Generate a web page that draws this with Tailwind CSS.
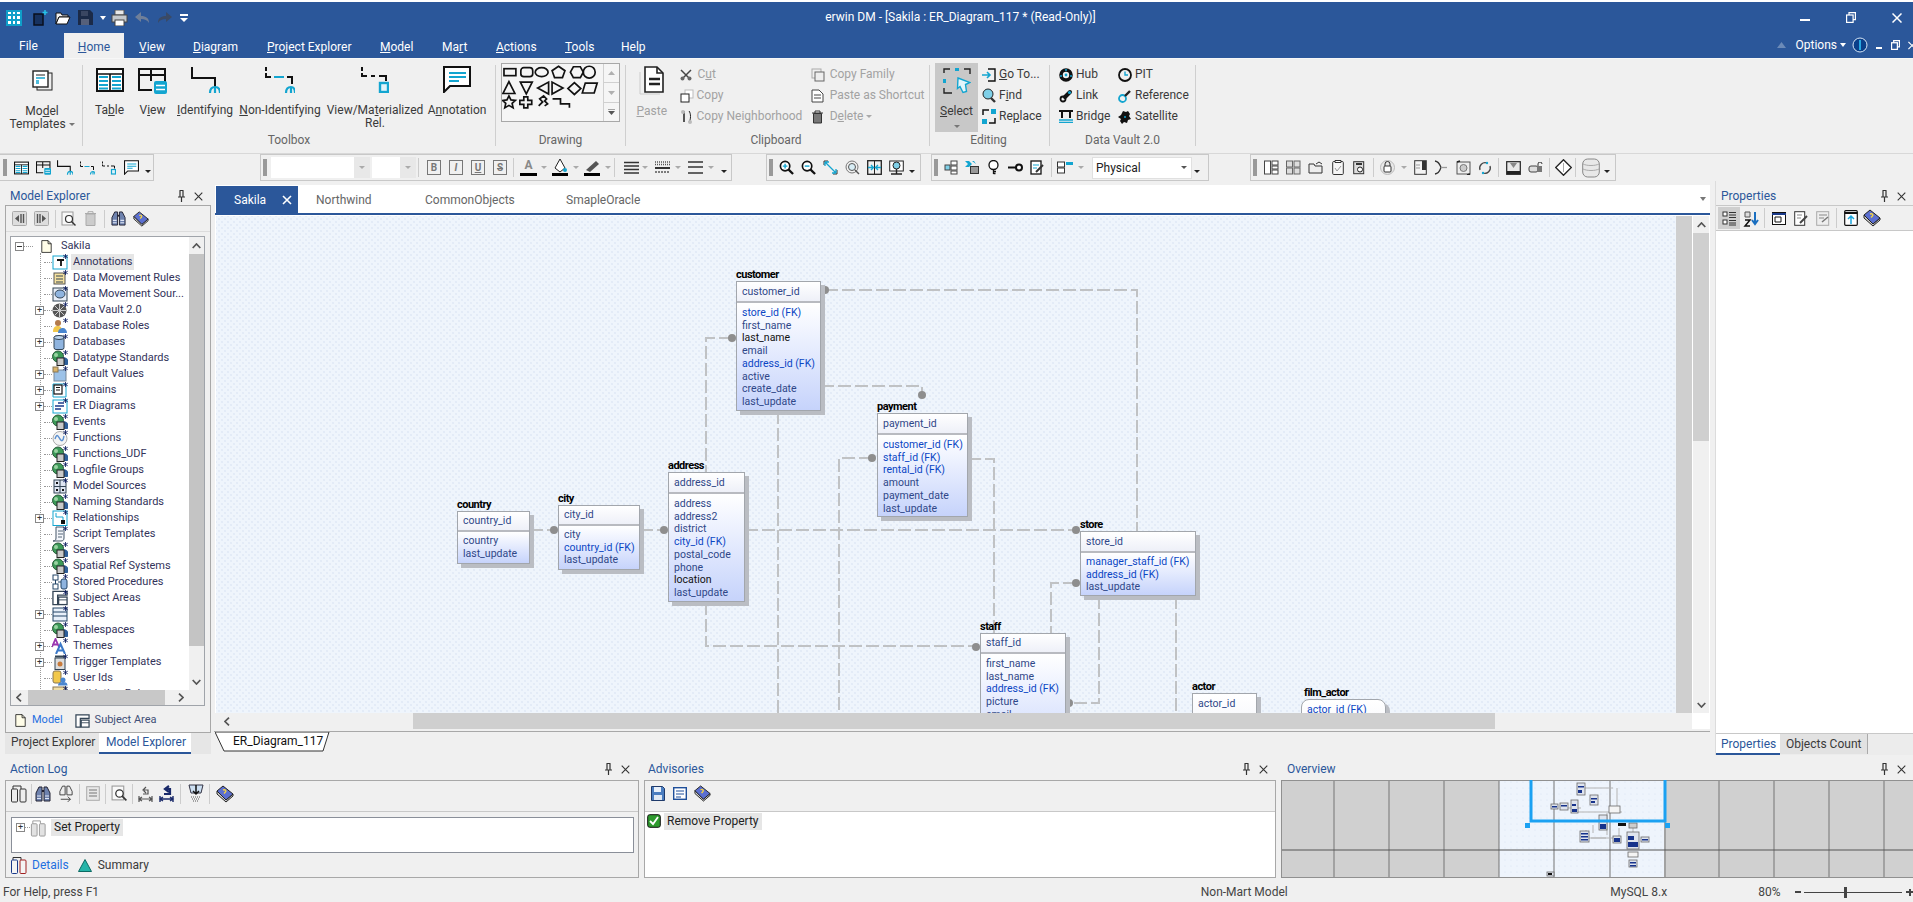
<!DOCTYPE html>
<html lang="en">
<head>
  <meta charset="UTF-8">
  <title>erwin DM</title>
  <script src="https://cdn.jsdelivr.net/npm/@tailwindcss/browser@4"></script>
</head>
<body class="bg-[#f0f0f0] overflow-hidden">

<!-- shared icons -->
<svg width="0" height="0" class="absolute">
  <defs>
    <symbol id="s-table" viewBox="0 0 28 24"><rect x="1" y="1" width="26" height="22" fill="#fff" stroke="#111" stroke-width="2"/><path d="M1 6h26M14 6v17" stroke="#111" stroke-width="1.600"/><path d="M3 9h9M3 13h9M3 17h9M3 20.500h9M16 9h9M16 13h9M16 17h9M16 20.500h9" stroke="#13a5d0" stroke-width="2"/></symbol>
    <symbol id="s-view" viewBox="0 0 29 26"><path d="M14 22H1V1h26v13M1 7h26M13 1v12" fill="none" stroke="#111" stroke-width="2"/><rect x="16" y="13" width="13" height="13" rx="2" fill="#13a5d0"/><path d="M18 17.500h9M18 21.500h9" stroke="#fff" stroke-width="1.500"/></symbol>
    <symbol id="s-ident" viewBox="0 0 29 26"><path d="M1 0v11h23v9" fill="none" stroke="#111" stroke-width="2"/><path d="M19 26c0-4 2-6 5-6s5 2 5 6M24 20v6" fill="none" stroke="#13a5d0" stroke-width="2.200"/></symbol>
    <symbol id="s-nonid" viewBox="0 0 30 26"><path d="M1 0v4M1 6v4h5M22 10h5v7" fill="none" stroke="#111" stroke-width="2"/><path d="M9 10h10" stroke="#13a5d0" stroke-width="2"/><path d="M21 26c0-4 2-6 5-6s4 2 4 6M26 20v6" fill="none" stroke="#13a5d0" stroke-width="2.200"/></symbol>
    <symbol id="s-viewrel" viewBox="0 0 28 26"><path d="M1 0v4M1 6v3h5M10 9h4M18 9h7v5" fill="none" stroke="#111" stroke-width="2"/><rect x="19" y="16" width="8" height="9" fill="#dff3fa" stroke="#13a5d0" stroke-width="2.400"/></symbol>
    <symbol id="s-annot" viewBox="0 0 28 27"><path d="M1 1h26v19H7l-6 6z" fill="#fff" stroke="#111" stroke-width="2"/><path d="M6 7h17M6 11h17M6 15h10" stroke="#13a5d0" stroke-width="2"/></symbol>
    <symbol id="s-star" viewBox="0 0 9 9"><path d="M4.500 0v9M.5 2.200l8 4.600M8.500 2.200l-8 4.600" stroke="#0b1a5e" stroke-width="1.500"/></symbol>
    <symbol id="s-globe" viewBox="0 0 16 16"><circle cx="6" cy="6.500" r="5.500" fill="#3c9a58" stroke="#2a5a3a"/><circle cx="4" cy="5" r="2" fill="#9ad3a2"/><path d="M8 9a4 4 0 0 1 7.500 6H8z" fill="#2f5f9a"/><rect x="5" y="8" width="7" height="7.500" fill="#c9c9c9" stroke="#222"/></symbol>
    <symbol id="s-pin" viewBox="0 0 9 12"><path d="M2.500.5h4M3 .5v6M6 .5v6M1 7h7M4.500 7v5" fill="none" stroke="#333" stroke-width="1.200"/></symbol>
    <symbol id="s-x" viewBox="0 0 9 9"><path d="M.7.700l7.600 7.600M8.300.700L.7 8.300" stroke="#333" stroke-width="1.100"/></symbol>
    <symbol id="s-book" viewBox="0 0 18 18"><path d="M1 6v3l9 8 7-6V9l-7 6z" fill="#d0d0d0" stroke="#222"/><path d="M1 6l6-5 10 8-7 6z" fill="#5b6fd0" stroke="#222"/><path d="M7 5c2-1 4 1 2 2.500l-1 1" fill="none" stroke="#f5d442" stroke-width="1.400"/></symbol>
    <symbol id="s-bino" viewBox="0 0 16 16"><path d="M4 1h3v14H1V7zM9 1h3l3 6v8H9z" fill="#6e82ae" stroke="#223"/><path d="M7 5h2" stroke="#223" stroke-width="2"/><path d="M2 10h4M2 12.500h4M10 10h4M10 12.500h4" stroke="#dfe6f5" stroke-width="1.200"/></symbol>
    <symbol id="s-find" viewBox="0 0 16 16"><circle cx="6.500" cy="6.500" r="5" fill="#fff" stroke="#111" stroke-width="1.800"/><path d="M10 10l5 5" stroke="#111" stroke-width="2.400"/></symbol>
    <symbol id="s-doc" viewBox="0 0 14 16"><path d="M1 .5h8l4 4v11H1z" fill="#fffde8" stroke="#111"/><path d="M9 .5v4h4" fill="none" stroke="#111"/></symbol>
    <symbol id="s-subj" viewBox="0 0 17 16"><path d="M1 15V1h15v4H6v10z" fill="#fff" stroke="#345" stroke-width="1.400"/><rect x="7" y="7" width="9" height="8" fill="#fff" stroke="#345" stroke-width="1.400"/><path d="M7 10h9" stroke="#345"/></symbol>
  </defs>
</svg>

<div class="w-[1913px] h-[902px] flex flex-col font-['Roboto','Liberation_Sans',sans-serif] text-[12px] text-[#3a3a3a] overflow-hidden">
  <div class="h-[2px] bg-white"></div>

  <!-- title row -->
  <div class="h-[31px] bg-[#2b579a] flex items-center text-white">
    <div class="w-[200px] flex items-center">
      <div class="ml-[6px] w-[16px] h-[16px] bg-[#0f9fc9] grid grid-cols-3 gap-[2px] p-[2px]">
        <span class="bg-white"></span><span class="bg-white"></span><span class="bg-white"></span>
        <span class="bg-white"></span><span class="bg-white"></span><span class="bg-white"></span>
        <span class="bg-white"></span><span class="bg-white"></span><span class="bg-white"></span>
      </div>
      <!-- quick access -->
      <svg class="ml-[11px]" width="15" height="16" viewBox="0 0 15 16"><path d="M1 4h9v11H1z" fill="#17325f" stroke="#0a0f1c" stroke-width="1.500"/><path d="M12 0v5M9.500 2.500h5" stroke="#25c2e8" stroke-width="1.500"/></svg>
      <svg class="ml-[7px]" width="16" height="14" viewBox="0 0 16 14"><path d="M1 2h5l1 2h6v2H4L1 13z" fill="#eee" stroke="#111"/><path d="M4 6h11l-3 7H1z" fill="#fff" stroke="#111"/></svg>
      <svg class="ml-[7px]" width="15" height="15" viewBox="0 0 15 15"><path d="M0 0h12l3 3v12H0z" fill="#1b2a48"/><rect x="3" y="1" width="7" height="5" fill="#3a4662"/><rect x="3" y="9" width="8" height="6" fill="#56607a"/></svg>
      <span class="ml-[7px] w-0 h-0 border-x-[3.500px] border-x-transparent border-t-[4px] border-t-white"></span>
      <svg class="ml-[5px]" width="17" height="16" viewBox="0 0 17 16"><rect x="4" y="0" width="9" height="5" fill="#e8e8e8" stroke="#555"/><rect x="1" y="5" width="15" height="7" fill="#c4c8cc" stroke="#444"/><rect x="4" y="10" width="9" height="6" fill="#fff" stroke="#444"/></svg>
      <svg class="ml-[6px]" width="16" height="13" viewBox="0 0 16 13"><path d="M7 1L1 6l6 5V8c4 0 6 1 8 4 0-5-3-7-8-7z" fill="#6f7f99"/></svg>
      <svg class="ml-[7px]" width="16" height="13" viewBox="0 0 16 13"><path d="M9 1l6 5-6 5V8C5 8 3 9 1 12c0-5 3-7 8-7z" fill="#3a4a66"/></svg>
      <span class="ml-[7px] flex flex-col items-center gap-[2px]"><span class="w-[8px] h-[2px] bg-white"></span><span class="w-0 h-0 border-x-[4px] border-x-transparent border-t-[4px] border-t-white"></span></span>
    </div>
    <div class="flex-1 text-center pl-[8px] pb-[1px]">erwin DM - [Sakila : ER_Diagram_117 * (Read-Only)]</div>
    <div class="w-[200px] flex items-center justify-end">
      <span class="w-[10px] h-[2px] bg-white mt-[4px]"></span>
      <svg class="ml-[36px]" width="10" height="11" viewBox="0 0 10 11" fill="none" stroke="#fff" stroke-width="1.200"><rect x=".6" y="3" width="6.500" height="7.400"/><path d="M3 3V.6h6.400v7H7"/></svg>
      <svg class="ml-[36px] mr-[11px]" width="10" height="10" viewBox="0 0 10 10"><path d="M.5.500l9 9M9.500.500l-9 9" stroke="#fff" stroke-width="1.500"/></svg>
    </div>
  </div>

  <!-- ribbon tabs -->
  <div class="h-[25px] bg-[#2b579a] flex text-white">
    <div class="w-[64px] pl-[19px] pt-[6px] leading-[15px]">File</div>
    <div class="w-[60px] bg-[#f0f0f0] text-[#2b579a] text-center pt-[7px] leading-[15px]"><u>H</u>ome</div>
    <div class="flex pl-[15px] pt-[7px] leading-[15px]">
      <span class="w-[54px]"><u>V</u>iew</span>
      <span class="w-[74px]"><u>D</u>iagram</span>
      <span class="w-[113px]"><u>P</u>roject Explorer</span>
      <span class="w-[62px]"><u>M</u>odel</span>
      <span class="w-[54px]">Ma<u>r</u>t</span>
      <span class="w-[69px]"><u>A</u>ctions</span>
      <span class="w-[56px]"><u>T</u>ools</span>
      <span>Help</span>
    </div>
    <div class="flex-1 flex items-center justify-end pb-[1px]">
      <svg width="9" height="6" viewBox="0 0 9 6"><path d="M0 6l4.500-6L9 6z" fill="#6b8ab8"/></svg>
      <span class="ml-[9px]">Options</span>
      <span class="ml-[3px] w-0 h-0 border-x-[3.500px] border-x-transparent border-t-[4px] border-t-white"></span>
      <svg class="ml-[6px]" width="16" height="16" viewBox="0 0 16 16"><circle cx="8" cy="8" r="7" fill="#0b3f8a" stroke="#d8e6f5"/><rect x="7" y="3" width="2" height="10" fill="#27a7e0"/></svg>
      <span class="ml-[8px] w-[6px] h-[2px] bg-white mt-[6px]"></span>
      <svg class="ml-[9px]" width="9" height="10" viewBox="0 0 10 11" fill="none" stroke="#fff" stroke-width="1.400"><rect x=".6" y="3" width="6.500" height="7.400"/><path d="M3 3V.6h6.400v7H7"/></svg>
      <svg class="ml-[8px] mr-[-3px]" width="8" height="9" viewBox="0 0 10 10"><path d="M.5.500l9 9M9.500.500l-9 9" stroke="#fff" stroke-width="1.500"/></svg>
    </div>
  </div>

  <!-- ribbon -->
  <div class="h-[95px] flex border-t border-t-[#f7f7f7] leading-[13px]">
    <!-- Model Templates -->
    <div class="w-[82px] h-full flex flex-col items-center pl-[2px]">
      <svg class="mt-[11px] ml-[1px]" width="21" height="21" viewBox="0 0 21 21"><rect x="5" y="3" width="15" height="17" fill="#eee" stroke="#222"/><rect x="1" y="1" width="15" height="16" fill="#fff" stroke="#222" stroke-width="1.400"/><path d="M4 5h9" stroke="#222"/><path d="M4 8h9M4 11h3M4 13h3" stroke="#13a5d0" stroke-width="1.500"/></svg>
      <div class="mt-[14px] text-center">Mo<u>d</u>el<br>Templates <span class="inline-block align-middle w-0 h-0 border-x-[3px] border-x-transparent border-t-[3px] border-t-[#777]"></span></div>
    </div>
    <div class="w-px h-[81px] mt-[6px] bg-[#cfcfcf]"></div>

    <!-- Toolbox -->
    <div class="w-[412px] flex flex-col">
      <div class="flex pl-[5px] h-[74px] pt-[6px] text-center">
        <div class="w-[43px] flex flex-col items-center"><svg class="mt-[3px]" width="28" height="24"><use href="#s-table"/></svg><div class="mt-[12px]">Ta<u>b</u>le</div></div>
        <div class="w-[43px] flex flex-col items-center"><svg class="mt-[3px]" width="29" height="26"><use href="#s-view"/></svg><div class="mt-[10px]">V<u>i</u>ew</div></div>
        <div class="w-[62px] flex flex-col items-center"><svg class="mt-[2px]" width="29" height="26"><use href="#s-ident"/></svg><div class="mt-[11px]"><u>I</u>dentifying</div></div>
        <div class="w-[88px] flex flex-col items-center"><svg class="mt-[2px]" width="30" height="26"><use href="#s-nonid"/></svg><div class="mt-[11px]"><u>N</u>on-Identifying</div></div>
        <div class="w-[102px] flex flex-col items-center"><svg class="mt-[2px]" width="28" height="26"><use href="#s-viewrel"/></svg><div class="mt-[11px]">View/Ma<u>t</u>erialized<br>Rel.</div></div>
        <div class="w-[62px] flex flex-col items-center"><svg class="mt-[1px]" width="28" height="27"><use href="#s-annot"/></svg><div class="mt-[11px]">A<u>n</u>notation</div></div>
      </div>
      <div class="mt-auto mb-[6px] text-center text-[#666]">Toolbox</div>
    </div>
    <div class="w-px h-[81px] mt-[6px] bg-[#cfcfcf]"></div>

    <!-- Drawing -->
    <div class="w-[129px] flex flex-col">
      <div class="ml-[5px] mt-[4px] w-[119px] h-[59px] border border-[#a8a8a8] flex bg-[#f5f5f5]">
        <svg width="102" height="57" viewBox="0 0 102 57" fill="none" stroke="#111" stroke-width="1.700">
          <rect x="2" y="4.500" width="12" height="7"/><rect x="19" y="3.500" width="12" height="9" rx="3"/><ellipse cx="40" cy="8" rx="6.500" ry="4.500"/><path d="M57 2l6.500 4.500-2.500 7h-8l-2.500-7z"/><path d="M69 8l3-5.500h7l3 5.500-3 5.500h-7z"/><circle cx="88" cy="8" r="6"/>
          <path d="M7 17.500l6 12H1z"/><path d="M18.500 18h12L24.500 30z"/><path d="M47 18v12l-11-6z"/><path d="M50.500 18v12l11-6z"/><path d="M73 18.500l6.500 6-6.500 6-6.500-6z"/><path d="M84 19h12l-3 10H81z"/>
          <path d="M7 32l2 4 4.500.500-3.300 3 1 4.500L7 41.500 2.800 44l1-4.500-3.300-3 4.500-.500z"/><path d="M22 33h4v3.500h4v4h-4V44h-4v-3.500h-4v-4h4z"/><path d="M37 42l4-4-3-3 4-3 3 3-2 2 3 3-3 2"/><path d="M51 35h8v5h9v4"/>
        </svg>
        <div class="ml-auto w-[16px] border-l border-l-[#d0d0d0] flex flex-col text-[#999]">
          <div class="h-[19px] border-b border-b-[#d0d0d0] flex items-center justify-center"><svg width="7" height="4" viewBox="0 0 7 4"><path d="M0 4l3.500-4L7 4z" fill="#b0b0b0"/></svg></div>
          <div class="h-[20px] border-b border-b-[#d0d0d0] flex items-center justify-center"><svg width="7" height="4" viewBox="0 0 7 4"><path d="M0 0l3.500 4L7 0z" fill="#b0b0b0"/></svg></div>
          <div class="h-[18px] flex items-center justify-center"><svg width="7" height="6" viewBox="0 0 7 6"><path d="M0 0h7" stroke="#555"/><path d="M0 2l3.500 4L7 2z" fill="#555"/></svg></div>
        </div>
      </div>
      <div class="mt-auto mb-[6px] text-center text-[#666]">Drawing</div>
    </div>
    <div class="w-px h-[81px] mt-[6px] bg-[#cfcfcf]"></div>

    <!-- Clipboard -->
    <div class="w-[303px] flex flex-col text-[#a2a2a2]">
      <div class="flex h-[74px]">
        <div class="ml-[8px] w-[36px] flex flex-col items-center">
          <svg class="mt-[7px]" width="25" height="29" viewBox="0 0 25 29"><path d="M1 6v22h20" fill="none" stroke="#ccc"/><path d="M6 1h12l6 6v19H6z" fill="#fff" stroke="#222" stroke-width="1.600"/><path d="M18 1v6h6" fill="none" stroke="#222" stroke-width="1.600"/><path d="M10 13h11M10 18h11" stroke="#222" stroke-width="2.400"/></svg>
          <div class="mt-[10px]"><u>P</u>aste</div>
        </div>
        <div class="ml-[10px] w-[133px] pt-[5px]">
          <div class="h-[21px] flex items-center"><svg class="mr-[6px]" width="12" height="12" viewBox="0 0 12 12"><path d="M1 1l8 8M11 1L3 9" stroke="#444" stroke-width="1.500"/><circle cx="2.500" cy="9.500" r="2" fill="#666"/><circle cx="9.500" cy="9.500" r="2" fill="#666"/></svg>C<u>u</u>t</div>
          <div class="h-[21px] flex items-center"><svg class="mr-[3px]" width="14" height="14" viewBox="0 0 14 14"><rect x="5" y="1" width="8" height="8" fill="#fff" stroke="#bbb"/><rect x="1" y="5" width="8" height="8" fill="#fff" stroke="#222"/></svg>Copy</div>
          <div class="h-[21px] flex items-center"><svg class="mr-[4px]" width="13" height="15" viewBox="0 0 13 15"><path d="M4 2v11" stroke="#222" stroke-width="1.500"/><path d="M9 2c2 2 2 9 0 11" fill="none" stroke="#222"/><circle cx="3" cy="3" r="2" fill="#bbb"/><circle cx="10" cy="13" r="2" fill="#bbb"/></svg>Copy Neighborhood</div>
        </div>
        <div class="w-[120px] pt-[5px]">
          <div class="h-[21px] flex items-center"><svg class="mr-[5px]" width="14" height="14" viewBox="0 0 14 14"><rect x="1" y="1" width="9" height="9" fill="none" stroke="#aaa"/><rect x="4" y="4" width="9" height="9" fill="#eee" stroke="#666"/></svg>Copy Family</div>
          <div class="h-[21px] flex items-center"><svg class="mr-[6px]" width="13" height="14" viewBox="0 0 13 14"><path d="M1 1h7l4 4v8H1z" fill="#fff" stroke="#444"/><path d="M3 6h7M3 9h7" stroke="#444"/></svg>Paste as Shortcut</div>
          <div class="h-[21px] flex items-center"><svg class="mr-[6px]" width="13" height="14" viewBox="0 0 13 14"><path d="M1 3h11M4 3V1h5v2" fill="none" stroke="#333"/><path d="M2.500 3.500h8V13h-8z" fill="#777" stroke="#333"/></svg>D<u>e</u>lete <span class="ml-[3px] w-0 h-0 border-x-[3px] border-x-transparent border-t-[3px] border-t-[#aaa]"></span></div>
        </div>
      </div>
      <div class="mt-auto mb-[6px] text-center text-[#666] pr-[3px]">Clipboard</div>
    </div>
    <div class="w-px h-[81px] mt-[6px] bg-[#cfcfcf]"></div>

    <!-- Editing -->
    <div class="w-[119px] flex flex-col">
      <div class="flex h-[74px]">
        <div class="ml-[5px] mt-[4px] w-[43px] h-[69px] bg-[#c8c8c8] flex flex-col items-center">
          <svg class="mt-[5px]" width="28" height="27" viewBox="0 0 28 27"><path d="M1 5V1h6M21 1h6v5M1 20v5h8" fill="none" stroke="#222" stroke-width="1.400"/><rect x="12" y="0" width="4" height="3" fill="#13a5d0"/><rect x="0" y="11" width="3" height="4" fill="#13a5d0"/><path d="M15 10l12 4.500-4.500 2 1 7-3.500 1-3-6-2.500 2z" fill="#e4f5fb" stroke="#13a5d0" stroke-width="1.400"/></svg>
          <div class="mt-[10px]"><u>S</u>elect</div>
          <span class="mt-[7px] w-0 h-0 border-x-[3px] border-x-transparent border-t-[3px] border-t-[#777]"></span>
        </div>
        <div class="ml-[4px] pt-[5px]">
          <div class="h-[21px] flex items-center"><svg class="mr-[3px]" width="14" height="14" viewBox="0 0 14 14"><path d="M6 1h7v12H6" fill="none" stroke="#111" stroke-width="1.400"/><path d="M0 7h8M5 4l3 3-3 3" fill="none" stroke="#13a5d0" stroke-width="1.600"/></svg><u>G</u>o To...</div>
          <div class="h-[21px] flex items-center"><svg class="mr-[3px]" width="14" height="15" viewBox="0 0 14 15"><circle cx="6" cy="6" r="5" fill="#7fd0e8" stroke="#222"/><path d="M9 10l4 4" stroke="#333" stroke-width="2.400"/></svg>F<u>i</u>nd</div>
          <div class="h-[21px] flex items-center"><svg class="mr-[3px]" width="14" height="15" viewBox="0 0 14 15"><path d="M1 6V1h6M13 9v5H7" fill="none" stroke="#111" stroke-width="1.500"/><rect x="9" y="0" width="5" height="5" fill="#13a5d0"/><rect x="0" y="10" width="5" height="5" fill="#13a5d0"/></svg>Re<u>p</u>lace</div>
        </div>
      </div>
      <div class="mt-auto mb-[6px] text-center text-[#666] pr-[2px]">Editing</div>
    </div>
    <div class="w-px h-[81px] mt-[6px] bg-[#cfcfcf]"></div>

    <!-- Data Vault -->
    <div class="w-[145px] flex flex-col">
      <div class="flex h-[74px] pt-[5px]">
        <div class="ml-[9px] w-[59px]">
          <div class="h-[21px] flex items-center"><svg class="mr-[3px]" width="14" height="14" viewBox="0 0 14 14"><circle cx="7" cy="7" r="5" fill="none" stroke="#111" stroke-width="3.600"/><circle cx="7" cy="7" r="1.400" fill="#13a5d0"/><circle cx="7" cy="2" r="1" fill="#13a5d0"/><circle cx="2" cy="8" r="1" fill="#13a5d0"/><circle cx="12" cy="8" r="1" fill="#13a5d0"/></svg>Hub</div>
          <div class="h-[21px] flex items-center"><svg class="mr-[3px]" width="14" height="14" viewBox="0 0 14 14"><path d="M6 8l5-5" stroke="#111" stroke-width="4" stroke-linecap="round"/><circle cx="4" cy="10" r="2.500" fill="none" stroke="#111" stroke-width="1.800"/><circle cx="10.500" cy="3.500" r="1.600" fill="#13a5d0"/></svg>Link</div>
          <div class="h-[21px] flex items-center"><svg class="mr-[3px]" width="14" height="13" viewBox="0 0 14 13"><path d="M0 1h14M3 2v6M11 2v6" stroke="#111" stroke-width="2"/><path d="M0 10h14M0 12.500h14" stroke="#13a5d0" stroke-width="1.300"/></svg>Bridge</div>
        </div>
        <div>
          <div class="h-[21px] flex items-center"><svg class="mr-[3px]" width="14" height="14" viewBox="0 0 14 14"><circle cx="7" cy="7" r="6" fill="none" stroke="#111" stroke-width="1.800"/><path d="M7 3.500V7h3" fill="none" stroke="#13a5d0" stroke-width="1.400"/></svg>PIT</div>
          <div class="h-[21px] flex items-center"><svg class="mr-[3px]" width="14" height="14" viewBox="0 0 14 14"><circle cx="4.500" cy="9.500" r="3.500" fill="none" stroke="#13a5d0" stroke-width="1.800"/><path d="M7 7l5-5" stroke="#222" stroke-width="2.400"/></svg>Reference</div>
          <div class="h-[21px] flex items-center"><svg class="mr-[3px]" width="14" height="14" viewBox="0 0 14 14"><path d="M5 1l3 1 2-1 2 3-1 2 2 3-3 1-1 3-3-1-2 2-2-3 1-2-3-2 3-2z" fill="#111"/><circle cx="7" cy="7" r="1" fill="#13a5d0"/></svg>Satellite</div>
        </div>
      </div>
      <div class="mt-auto mb-[6px] text-center text-[#666]">Data Vault 2.0</div>
    </div>
    <div class="w-px h-[81px] mt-[6px] bg-[#cfcfcf]"></div>
  </div>

  <!-- toolbar strip -->
  <div class="h-[28px] border-t border-t-[#d8d8d8] flex">
    <!-- group 1 -->
    <div class="w-[154px] h-[27px] border-y border-r border-[#c8c8c8] flex items-center">
      <span class="ml-[3px] w-[4px] h-[17px] bg-[radial-gradient(#999_1px,transparent_1px)] bg-[length:2px_2px]"></span>
      <svg class="ml-[7px]" width="15" height="14"><use href="#s-table"/></svg>
      <svg class="ml-[7px]" width="15" height="14"><use href="#s-view"/></svg>
      <svg class="ml-[6px]" width="16" height="15"><use href="#s-ident"/></svg>
      <svg class="ml-[7px]" width="15" height="14"><use href="#s-nonid"/></svg>
      <svg class="ml-[7px]" width="14" height="14"><use href="#s-viewrel"/></svg>
      <svg class="ml-[8px]" width="15" height="15"><use href="#s-annot"/></svg>
      <span class="ml-[6px] mt-[8px] w-0 h-0 border-x-[3px] border-x-transparent border-t-[3px] border-t-[#222]"></span>
    </div>

    <!-- group 2 formatting -->
    <div class="ml-[106px] w-[472px] h-[27px] border border-[#c8c8c8] flex items-center">
      <span class="ml-[2px] w-[4px] h-[17px] bg-[radial-gradient(#999_1px,transparent_1px)] bg-[length:2px_2px]"></span>
      <div class="ml-[4px] w-[83px] h-[21px] bg-white"></div>
      <div class="w-[16px] h-[21px] bg-[#e8e8e8] flex items-center justify-center"><span class="w-0 h-0 border-x-[3px] border-x-transparent border-t-[3px] border-t-[#aaa]"></span></div>
      <div class="ml-[2px] w-[28px] h-[21px] bg-white"></div>
      <div class="w-[16px] h-[21px] bg-[#e8e8e8] flex items-center justify-center"><span class="w-0 h-0 border-x-[3px] border-x-transparent border-t-[3px] border-t-[#aaa]"></span></div>
      <span class="ml-[2px] w-px h-[19px] bg-[#ccc]"></span>
      <span class="ml-[8px] w-[14px] h-[15px] border border-[#777] text-[10px] leading-[13px] text-center font-bold text-[#777]">B</span>
      <span class="ml-[8px] w-[14px] h-[15px] border border-[#777] text-[10px] leading-[13px] text-center font-bold italic text-[#777]">I</span>
      <span class="ml-[8px] w-[14px] h-[15px] border border-[#777] text-[10px] leading-[13px] text-center font-bold underline text-[#777]">U</span>
      <span class="ml-[8px] w-[14px] h-[15px] border border-[#777] text-[10px] leading-[13px] text-center font-bold line-through text-[#777]">S</span>
      <span class="ml-[6px] w-px h-[19px] bg-[#ccc]"></span>
      <span class="ml-[6px] w-[17px] h-[17px] border-b-[3px] border-b-black text-[12px] leading-[13px] text-center font-bold text-[#888]">A</span>
      <span class="ml-[4px] w-0 h-0 border-x-[3px] border-x-transparent border-t-[3px] border-t-[#aaa]"></span>
      <svg class="ml-[5px]" width="16" height="17" viewBox="0 0 16 17"><path d="M8 0L3 9l5 4 5-4z" fill="#fff" stroke="#222"/><circle cx="13" cy="11" r="2" fill="#13a5d0"/><path d="M0 15.500h16" stroke="#000" stroke-width="3"/></svg>
      <span class="ml-[5px] w-0 h-0 border-x-[3px] border-x-transparent border-t-[3px] border-t-[#aaa]"></span>
      <svg class="ml-[5px]" width="16" height="17" viewBox="0 0 16 17"><path d="M2 11L12 2l3 3-9 8z" fill="#555"/><path d="M0 15.500h16" stroke="#000" stroke-width="3"/></svg>
      <span class="ml-[5px] w-0 h-0 border-x-[3px] border-x-transparent border-t-[3px] border-t-[#aaa]"></span>
      <span class="ml-[3px] w-px h-[19px] bg-[#ccc]"></span>
      <svg class="ml-[9px]" width="15" height="13" viewBox="0 0 15 13"><path d="M0 1.500h15M0 5h15M0 8.500h15M0 12h15" stroke="#333" stroke-width="1.400"/></svg>
      <span class="ml-[3px] w-0 h-0 border-x-[3px] border-x-transparent border-t-[3px] border-t-[#aaa]"></span>
      <svg class="ml-[7px]" width="15" height="13" viewBox="0 0 15 13"><path d="M0 1h15M0 3.500h15" stroke="#555" stroke-dasharray="1 1" stroke-width="1.400"/><path d="M0 7h15" stroke="#333" stroke-width="2"/><path d="M0 11h15" stroke="#555" stroke-dasharray="2 1" stroke-width="1.400"/></svg>
      <span class="ml-[5px] w-0 h-0 border-x-[3px] border-x-transparent border-t-[3px] border-t-[#aaa]"></span>
      <svg class="ml-[7px]" width="15" height="13" viewBox="0 0 15 13"><path d="M0 1h15M0 6h15M0 12h15" stroke="#333" stroke-width="1.400"/></svg>
      <span class="ml-[5px] w-0 h-0 border-x-[3px] border-x-transparent border-t-[3px] border-t-[#aaa]"></span>
      <span class="ml-[7px] mt-[8px] w-0 h-0 border-x-[3px] border-x-transparent border-t-[3px] border-t-[#222]"></span>
    </div>

    <!-- group 3 zoom -->
    <div class="ml-[34px] w-[155px] h-[27px] border border-[#c8c8c8] flex items-center">
      <span class="ml-[2px] w-[4px] h-[17px] bg-[radial-gradient(#999_1px,transparent_1px)] bg-[length:2px_2px]"></span>
      <svg class="ml-[6px]" width="15" height="15" viewBox="0 0 16 16"><use href="#s-find"/><path d="M4 6.500h5M6.500 4v5" stroke="#13a5d0" stroke-width="1.500"/></svg>
      <svg class="ml-[7px]" width="15" height="15" viewBox="0 0 16 16"><use href="#s-find"/><path d="M4 6.500h5" stroke="#13a5d0" stroke-width="1.500"/></svg>
      <svg class="ml-[7px]" width="15" height="15" viewBox="0 0 15 15"><path d="M1 5V1h4M14 10v4h-4" fill="none" stroke="#333"/><path d="M2 2l11 11M2 2v4M2 2h4M13 13V9M13 13H9" fill="none" stroke="#13a5d0" stroke-width="1.300"/></svg>
      <svg class="ml-[7px]" width="15" height="15" viewBox="0 0 15 15" fill="none"><circle cx="7" cy="7" r="6" stroke="#777"/><circle cx="7" cy="7" r="3.500" fill="#d8eef6" stroke="#555"/><path d="M10 10l4 4" stroke="#555" stroke-width="1.500"/></svg>
      <svg class="ml-[7px]" width="15" height="15" viewBox="0 0 15 15" fill="none"><rect x=".7" y=".7" width="13.600" height="13.600" stroke="#222" stroke-width="1.300"/><path d="M7.500 1v13" stroke="#222"/><path d="M1 7.500h5M14 7.500H9M4 5l2.500 2.500L4 10M11 5L8.500 7.500 11 10" stroke="#13a5d0" stroke-width="1.300"/></svg>
      <svg class="ml-[7px]" width="15" height="15" viewBox="0 0 15 15"><rect x=".7" y="1" width="13.600" height="10" fill="#fff" stroke="#222"/><circle cx="7.500" cy="5.500" r="3.500" fill="#7fd0e8" stroke="#222"/><path d="M7.500 9v5M2 14h11" stroke="#222" stroke-width="1.400"/></svg>
      <span class="ml-[5px] mt-[8px] w-0 h-0 border-x-[3px] border-x-transparent border-t-[3px] border-t-[#222]"></span>
    </div>

    <!-- group 4 -->
    <div class="ml-[10px] w-[278px] h-[27px] border border-[#c8c8c8] flex items-center">
      <span class="ml-[2px] w-[4px] h-[17px] bg-[radial-gradient(#999_1px,transparent_1px)] bg-[length:2px_2px]"></span>
      <svg class="ml-[6px]" width="14" height="15" viewBox="0 0 14 15"><rect x="7" y="1" width="6" height="4" fill="#fff" stroke="#444"/><rect x="7" y="6" width="6" height="4" fill="#fff" stroke="#444"/><rect x="7" y="11" width="6" height="3" fill="#fff" stroke="#444"/><rect x="1" y="5" width="5" height="5" fill="#7fd0e8" stroke="#444"/></svg>
      <svg class="ml-[7px]" width="15" height="15" viewBox="0 0 15 15"><path d="M0 1h4l3 3-3 3H0l3-3zM7 1h2l2 3" fill="#13a5d0"/><rect x="5" y="6" width="9" height="8" fill="#333"/><path d="M6 8h7M6 10h7M6 12h7" stroke="#fff"/></svg>
      <svg class="ml-[8px]" width="11" height="15" viewBox="0 0 11 15"><circle cx="5.500" cy="5" r="4.500" fill="#fff" stroke="#111" stroke-width="1.300"/><path d="M5.500 9v5M5.500 11.500h2.500M5.500 13.500h2" stroke="#111" stroke-width="1.300"/></svg>
      <svg class="ml-[9px]" width="15" height="9" viewBox="0 0 15 9"><circle cx="11" cy="4.500" r="3" fill="#fff" stroke="#111" stroke-width="2"/><path d="M0 4.500h8" stroke="#111" stroke-width="2"/></svg>
      <svg class="ml-[7px]" width="14" height="15" viewBox="0 0 14 15"><rect x="1" y="1" width="10" height="13" fill="#fff" stroke="#111" stroke-width="1.300"/><path d="M3 5h6M3 8h4" stroke="#13a5d0"/><path d="M6 12l7-7" stroke="#333" stroke-width="2"/></svg>
      <span class="ml-[7px] w-px h-[19px] bg-[#ccc]"></span>
      <svg class="ml-[5px]" width="16" height="13" viewBox="0 0 16 13"><rect x=".5" y="1" width="7" height="5" fill="#fff" stroke="#333"/><rect x=".5" y="7" width="7" height="5" fill="#fff" stroke="#333"/><rect x="9" y="1" width="7" height="3" fill="#13a5d0"/></svg>
      <span class="ml-[5px] w-0 h-0 border-x-[3px] border-x-transparent border-t-[3px] border-t-[#aaa]"></span>
      <div class="ml-[8px] w-[100px] h-[22px] bg-white border border-[#e0e0e0] flex items-center pl-[3px] text-[#222]">Physical<span class="ml-auto mr-[4px] w-0 h-0 border-x-[3px] border-x-transparent border-t-[3px] border-t-[#555]"></span></div>
      <span class="ml-[2px] mt-[8px] w-0 h-0 border-x-[3px] border-x-transparent border-t-[3px] border-t-[#222]"></span>
    </div>

    <!-- group 5 -->
    <div class="ml-[41px] w-[366px] h-[27px] border border-[#c8c8c8] flex items-center">
      <span class="ml-[2px] w-[4px] h-[17px] bg-[radial-gradient(#999_1px,transparent_1px)] bg-[length:2px_2px]"></span>
      <svg class="ml-[7px]" width="15" height="15" viewBox="0 0 15 15" fill="#fff" stroke="#444"><rect x=".5" y="1" width="6" height="13"/><rect x="8" y="1" width="6" height="4"/><rect x="8" y="6" width="6" height="3"/><rect x="8" y="10" width="6" height="4"/></svg>
      <svg class="ml-[7px]" width="15" height="15" viewBox="0 0 15 15" fill="#ddd" stroke="#666"><rect x=".5" y="1" width="6" height="6"/><rect x="8" y="1" width="6" height="6"/><rect x=".5" y="8" width="6" height="6"/><rect x="8" y="8" width="6" height="6"/></svg>
      <svg class="ml-[7px]" width="15" height="13" viewBox="0 0 15 13"><path d="M1 3h5l1 2h7v7H1z" fill="#eee" stroke="#333"/><path d="M8 3l3-2 3 2" fill="none" stroke="#333"/></svg>
      <svg class="ml-[9px]" width="12" height="15" viewBox="0 0 12 15"><rect x=".7" y="1.500" width="10.600" height="13" rx="1" fill="#f6f6f6" stroke="#333"/><path d="M3 .5h6v2H3z" fill="#fff" stroke="#333"/><path d="M3 8l2 3 4-5" fill="none" stroke="#999"/></svg>
      <svg class="ml-[9px]" width="13" height="14" viewBox="0 0 13 14"><rect x=".7" y=".7" width="10" height="12" fill="#ddd" stroke="#333"/><path d="M3 3h6" stroke="#333" stroke-width="2"/><circle cx="7" cy="8.500" r="2.500" fill="#fff" stroke="#222"/></svg>
      <span class="ml-[7px] w-px h-[19px] bg-[#ccc]"></span>
      <svg class="ml-[6px]" width="15" height="17" viewBox="0 0 15 17"><circle cx="7.500" cy="8.500" r="7" fill="#e8e8e8" stroke="#bbb"/><path d="M5 7V5a2.500 2.500 0 0 1 5 0v2" fill="none" stroke="#333"/><rect x="4" y="7" width="7" height="6" rx="1" fill="#fff" stroke="#333"/></svg>
      <span class="ml-[6px] w-0 h-0 border-x-[3px] border-x-transparent border-t-[3px] border-t-[#aaa]"></span>
      <svg class="ml-[7px]" width="13" height="15" viewBox="0 0 13 15"><rect x=".7" y=".7" width="11.600" height="13.600" fill="#f4f4f4" stroke="#333"/><rect x="8" y="1" width="4" height="9" fill="#333"/><path d="M2 5h4M2 8h4" stroke="#999"/></svg>
      <svg class="ml-[7px]" width="14" height="15" viewBox="0 0 14 15"><path d="M1 1c5 1 5 5 6 6.500C6 9 6 13 1 14" fill="none" stroke="#333" stroke-width="1.300"/><path d="M7 7.500h6" stroke="#999" stroke-width="1.300"/></svg>
      <svg class="ml-[8px]" width="15" height="15" viewBox="0 0 15 15"><rect x="1" y="2" width="13" height="12" fill="#eee" stroke="#555"/><circle cx="7.500" cy="8" r="3.500" fill="#ccc" stroke="#777"/><path d="M1 2l3-1M14 14l-3 1" stroke="#222" stroke-width="1.500"/></svg>
      <svg class="ml-[7px]" width="14" height="14" viewBox="0 0 14 14" fill="none"><path d="M2 9A5.500 5.500 0 0 1 9 2M12 5a5.500 5.500 0 0 1-7 7" stroke="#444" stroke-width="1.300"/><circle cx="9" cy="2" r="1.200" fill="#13a5d0"/><circle cx="5" cy="12" r="1.200" fill="#13a5d0"/></svg>
      <span class="ml-[6px] w-px h-[19px] bg-[#ccc]"></span>
      <svg class="ml-[7px]" width="15" height="14" viewBox="0 0 15 14"><rect x=".7" y=".7" width="13.600" height="12.600" fill="#e8e8e8" stroke="#222" stroke-width="1.200"/><path d="M4 2h7L7.500 7z" fill="#888"/><path d="M1 10h13v3H1z" fill="#222"/></svg>
      <svg class="ml-[7px]" width="15" height="11" viewBox="0 0 15 11"><rect x="1" y="4" width="9" height="6" rx="2" fill="#ddd" stroke="#444"/><rect x="9" y="4" width="5" height="6" fill="#777"/><path d="M10 4V2a2 2 0 0 1 4 0" fill="none" stroke="#333"/></svg>
      <span class="ml-[6px] w-px h-[19px] bg-[#ccc]"></span>
      <svg class="ml-[5px]" width="17" height="17" viewBox="0 0 17 17"><path d="M8.500.7l7.800 7.800-7.800 7.800L.7 8.500z" fill="#fff" stroke="#222" stroke-width="1.300"/><path d="M8.500 4v9" stroke="#aaa"/></svg>
      <span class="ml-[3px] w-px h-[19px] bg-[#ccc]"></span>
      <svg class="ml-[6px]" width="18" height="20" viewBox="0 0 18 20"><rect x=".7" y="1" width="16.600" height="18" rx="5" fill="#e8e8e8" stroke="#888"/><path d="M1 6c4 2 12 2 16 0M1 11c4 2 12 2 16 0" fill="none" stroke="#aaa"/></svg>
      <span class="ml-[4px] mt-[8px] w-0 h-0 border-x-[3px] border-x-transparent border-t-[3px] border-t-[#222]"></span>
    </div>
  </div>

  <!-- main area -->
  <div class="h-[574px] flex">
    <!-- left panel -->
    <div class="ml-[5px] w-[206px] flex flex-col">
      <div class="h-[24px] pt-[6px] flex items-center pl-[5px] text-[#2b579a]">Model Explorer
        <svg class="ml-auto" width="9" height="12"><use href="#s-pin"/></svg>
        <svg class="ml-[8px] mr-[8px]" width="9" height="9"><use href="#s-x"/></svg>
      </div>
      <div class="h-[528px] border border-[#a8a8a8] flex flex-col">
        <div class="h-[26px] flex items-center border-b border-b-[#dcdcdc]">
          <svg class="ml-[6px]" width="15" height="15" viewBox="0 0 15 15"><rect x=".5" y=".5" width="14" height="14" rx="1" fill="#ddd" stroke="#aaa"/><path d="M7 4L3 7.500 7 11z" fill="#555"/><path d="M9 3v9M11.500 3v9" stroke="#555" stroke-width="1.400"/></svg>
          <svg class="ml-[7px]" width="15" height="15" viewBox="0 0 15 15"><rect x=".5" y=".5" width="14" height="14" rx="1" fill="#ddd" stroke="#aaa"/><path d="M8 4l4 3.500L8 11z" fill="#555"/><path d="M3.500 3v9M6 3v9" stroke="#555" stroke-width="1.400"/></svg>
          <span class="ml-[6px] w-px h-[18px] bg-[#ccc]"></span>
          <svg class="ml-[5px]" width="16" height="16" viewBox="0 0 16 16"><rect x="1" y="1" width="11" height="13" fill="#f8f8f8" stroke="#999"/><circle cx="8" cy="8" r="3.500" fill="#fff" stroke="#333" stroke-width="1.200"/><path d="M10.500 10.500l4 4" stroke="#333" stroke-width="1.500"/></svg>
          <svg class="ml-[7px]" width="13" height="15" viewBox="0 0 13 15"><path d="M1 2.500h11M4 2V.7h5V2" fill="none" stroke="#aaa"/><path d="M2 3h9v11.500H2z" fill="#ccc" stroke="#aaa"/></svg>
          <span class="ml-[7px] w-px h-[18px] bg-[#ccc]"></span>
          <svg class="ml-[6px]" width="15" height="15"><use href="#s-bino"/></svg>
          <svg class="ml-[7px]" width="16" height="16"><use href="#s-book"/></svg>
        </div>

        <!-- tree -->
        <div class="mt-[4px] ml-[4px] w-[195px] h-[470px] border border-[#a0a4aa] bg-white flex flex-col">
          <div class="flex h-[453px]">
            <div class="relative w-[178px] h-full pt-[1px] overflow-hidden text-[#33335a] leading-[16px] text-[11px] whitespace-nowrap">
              <div class="absolute left-[29px] top-[16px] h-[440px] border-l border-dotted border-l-[#999]"></div>
              <div class="relative h-4 flex items-center"><span class="ml-[4px] w-[9px] h-[9px] border border-[#888] bg-white flex items-center justify-center"><span class="w-[5px] h-px bg-[#333]"></span></span><span class="w-[9px] border-t border-dotted border-t-[#999]"></span><svg class="ml-[8px]" width="11" height="13"><use href="#s-doc"/></svg><span class="ml-[9px]">Sakila</span></div>

              <div class="relative h-4 flex items-center pl-[33px]"><span class="w-[8px] border-t border-dotted border-t-[#999]"></span><svg class="mr-[2px]" width="16" height="16" viewBox="0 0 16 16"><rect x="1" y="2" width="14" height="13" fill="#fff" stroke="#13a5d0"/><path d="M5 6h7M9 6v6" stroke="#111" stroke-width="1.800"/><use href="#s-star" x="11" y="0" width="5" height="5"/></svg><span class="ml-[1px] px-[2px] bg-[#e6e6e6]">Annotations</span></div>

              <div class="relative h-4 flex items-center pl-[33px]"><span class="w-[8px] border-t border-dotted border-t-[#999]"></span><svg class="mr-[5px]" width="16" height="16" viewBox="0 0 16 16"><rect x="2" y="3" width="11" height="11" fill="#f6e2a0" stroke="#555"/><path d="M4 6h7M4 9h7M4 12h7" stroke="#345"/><use href="#s-star" x="11" y="0" width="5" height="5"/></svg>Data Movement Rules</div>

              <div class="relative h-4 flex items-center pl-[33px]"><span class="w-[8px] border-t border-dotted border-t-[#999]"></span><svg class="mr-[5px]" width="16" height="16" viewBox="0 0 16 16"><rect x="1" y="2" width="14" height="13" fill="#e8eef8" stroke="#345"/><ellipse cx="8" cy="8" rx="5" ry="4" fill="#8fb4df" stroke="#345"/><use href="#s-star" x="11" y="0" width="5" height="5"/></svg>Data Movement Sour...</div>

              <div class="relative h-4 flex items-center pl-[24px]"><span class="w-[9px] h-[9px] border border-[#888] bg-white relative flex items-center justify-center text-[9px] leading-[7px] text-[#333]">+</span><span class="w-[8px] border-t border-dotted border-t-[#999]"></span><svg class="mr-[5px]" width="16" height="16" viewBox="0 0 16 16"><circle cx="7.500" cy="8.500" r="7" fill="#555"/><path d="M1 8.500h13M7.500 2v13M3 4l9 9M12 4l-9 9" stroke="#ccc"/><use href="#s-star" x="11" y="0" width="5" height="5"/></svg>Data Vault 2.0</div>

              <div class="relative h-4 flex items-center pl-[33px]"><span class="w-[8px] border-t border-dotted border-t-[#999]"></span><svg class="mr-[5px]" width="16" height="16" viewBox="0 0 16 16"><circle cx="6" cy="5" r="3" fill="#b37a4a"/><path d="M1 14c0-5 2-6 5-6s4 2 4 6z" fill="#f2c84b"/><path d="M6 15c0-4 3-5 5-5s4 2 4 5z" fill="#4a86d0"/><use href="#s-star" x="11" y="0" width="5" height="5"/></svg>Database Roles</div>

              <div class="relative h-4 flex items-center pl-[24px]"><span class="w-[9px] h-[9px] border border-[#888] bg-white relative flex items-center justify-center text-[9px] leading-[7px] text-[#333]">+</span><span class="w-[8px] border-t border-dotted border-t-[#999]"></span><svg class="mr-[5px]" width="16" height="16" viewBox="0 0 16 16"><rect x="2" y="2" width="10" height="13.500" rx="2" fill="#8fb4df" stroke="#345"/><ellipse cx="7" cy="3.500" rx="5" ry="2" fill="#bcd4ee" stroke="#345"/><use href="#s-star" x="11" y="0" width="5" height="5"/></svg>Databases</div>

              <div class="relative h-4 flex items-center pl-[33px]"><span class="w-[8px] border-t border-dotted border-t-[#999]"></span><svg class="mr-[5px]" width="16" height="16" viewBox="0 0 16 16"><use href="#s-globe" width="16" height="16"/><use href="#s-star" x="11" y="0" width="5" height="5"/></svg>Datatype Standards</div>

              <div class="relative h-4 flex items-center pl-[24px]"><span class="w-[9px] h-[9px] border border-[#888] bg-white relative flex items-center justify-center text-[9px] leading-[7px] text-[#333]">+</span><span class="w-[8px] border-t border-dotted border-t-[#999]"></span><svg class="mr-[5px]" width="16" height="16" viewBox="0 0 16 16"><rect x="2" y="4" width="12" height="11" fill="#9cc2e8" stroke="#789"/><rect x="1" y="1" width="5" height="5" fill="#d9b36a" stroke="#875"/><use href="#s-star" x="11" y="0" width="5" height="5"/></svg>Default Values</div>

              <div class="relative h-4 flex items-center pl-[24px]"><span class="w-[9px] h-[9px] border border-[#888] bg-white relative flex items-center justify-center text-[9px] leading-[7px] text-[#333]">+</span><span class="w-[8px] border-t border-dotted border-t-[#999]"></span><svg class="mr-[5px]" width="16" height="16" viewBox="0 0 16 16"><path d="M10 15H1V2h13v13z" fill="#fff" stroke="#13a5d0"/><rect x="2" y="3" width="8" height="9" fill="#fff" stroke="#111" stroke-width="1.200"/><path d="M4 5.500h4M4 8h4" stroke="#111"/><use href="#s-star" x="11" y="0" width="5" height="5"/></svg>Domains</div>

              <div class="relative h-4 flex items-center pl-[24px]"><span class="w-[9px] h-[9px] border border-[#888] bg-white relative flex items-center justify-center text-[9px] leading-[7px] text-[#333]">+</span><span class="w-[8px] border-t border-dotted border-t-[#999]"></span><svg class="mr-[5px]" width="16" height="16" viewBox="0 0 16 16"><rect x="1" y="2" width="14" height="13" fill="#fff" stroke="#13a5d0"/><path d="M6 5h6M3 8h9M3 11h6" stroke="#1a3a8a" stroke-width="1.500"/><use href="#s-star" x="11" y="0" width="5" height="5"/></svg>ER Diagrams</div>

              <div class="relative h-4 flex items-center pl-[33px]"><span class="w-[8px] border-t border-dotted border-t-[#999]"></span><svg class="mr-[5px]" width="16" height="16" viewBox="0 0 16 16"><use href="#s-globe" width="16" height="16"/><use href="#s-star" x="11" y="0" width="5" height="5"/></svg>Events</div>

              <div class="relative h-4 flex items-center pl-[33px]"><span class="w-[8px] border-t border-dotted border-t-[#999]"></span><svg class="mr-[5px]" width="16" height="16" viewBox="0 0 16 16"><circle cx="8" cy="8.500" r="7" fill="#f4f4f4" stroke="#aaa"/><path d="M3 9c2-6 3-3 5 0s3 2 4-3" fill="none" stroke="#5a8fd0" stroke-width="1.400"/><use href="#s-star" x="11" y="0" width="5" height="5"/></svg>Functions</div>

              <div class="relative h-4 flex items-center pl-[33px]"><span class="w-[8px] border-t border-dotted border-t-[#999]"></span><svg class="mr-[5px]" width="16" height="16" viewBox="0 0 16 16"><use href="#s-globe" width="16" height="16"/><use href="#s-star" x="11" y="0" width="5" height="5"/></svg>Functions_UDF</div>

              <div class="relative h-4 flex items-center pl-[33px]"><span class="w-[8px] border-t border-dotted border-t-[#999]"></span><svg class="mr-[5px]" width="16" height="16" viewBox="0 0 16 16"><use href="#s-globe" width="16" height="16"/><use href="#s-star" x="11" y="0" width="5" height="5"/></svg>Logfile Groups</div>

              <div class="relative h-4 flex items-center pl-[33px]"><span class="w-[8px] border-t border-dotted border-t-[#999]"></span><svg class="mr-[5px]" width="16" height="16" viewBox="0 0 16 16"><rect x="2" y="2" width="12" height="13" fill="#dfe6f2" stroke="#345"/><path d="M8 2v13M2 8.500h12" stroke="#345"/><rect x="4" y="4" width="2" height="2" fill="#111"/><rect x="4" y="11" width="2" height="2" fill="#111"/><rect x="10" y="11" width="2" height="2" fill="#111"/><use href="#s-star" x="11" y="0" width="5" height="5"/></svg>Model Sources</div>

              <div class="relative h-4 flex items-center pl-[33px]"><span class="w-[8px] border-t border-dotted border-t-[#999]"></span><svg class="mr-[5px]" width="16" height="16" viewBox="0 0 16 16"><use href="#s-globe" width="16" height="16"/><use href="#s-star" x="11" y="0" width="5" height="5"/></svg>Naming Standards</div>

              <div class="relative h-4 flex items-center pl-[24px]"><span class="w-[9px] h-[9px] border border-[#888] bg-white relative flex items-center justify-center text-[9px] leading-[7px] text-[#333]">+</span><span class="w-[8px] border-t border-dotted border-t-[#999]"></span><svg class="mr-[5px]" width="16" height="16" viewBox="0 0 16 16"><rect x="1" y="1" width="14" height="14.500" fill="#fff" stroke="#13a5d0"/><path d="M4 3v4h7v3" fill="none" stroke="#13a5d0"/><rect x="9" y="10" width="4" height="4" fill="#111"/><use href="#s-star" x="11" y="0" width="5" height="5"/></svg>Relationships</div>

              <div class="relative h-4 flex items-center pl-[33px]"><span class="w-[8px] border-t border-dotted border-t-[#999]"></span><svg class="mr-[5px]" width="16" height="16" viewBox="0 0 16 16"><path d="M4 1h8v11c0 2-1 3-3 3H1c2 0 3-1 3-3z" fill="#f4f6fb" stroke="#456"/><path d="M6 5h5M6 8h5M6 11h4" stroke="#567"/><use href="#s-star" x="11" y="0" width="5" height="5"/></svg>Script Templates</div>

              <div class="relative h-4 flex items-center pl-[33px]"><span class="w-[8px] border-t border-dotted border-t-[#999]"></span><svg class="mr-[5px]" width="16" height="16" viewBox="0 0 16 16"><use href="#s-globe" width="16" height="16"/><use href="#s-star" x="11" y="0" width="5" height="5"/></svg>Servers</div>

              <div class="relative h-4 flex items-center pl-[33px]"><span class="w-[8px] border-t border-dotted border-t-[#999]"></span><svg class="mr-[5px]" width="16" height="16" viewBox="0 0 16 16"><use href="#s-globe" width="16" height="16"/><use href="#s-star" x="11" y="0" width="5" height="5"/></svg>Spatial Ref Systems</div>

              <div class="relative h-4 flex items-center pl-[33px]"><span class="w-[8px] border-t border-dotted border-t-[#999]"></span><svg class="mr-[5px]" width="16" height="16" viewBox="0 0 16 16"><rect x="1" y="1" width="5" height="5" fill="#fff" stroke="#246"/><rect x="1" y="10" width="5" height="5" fill="#fff" stroke="#246"/><path d="M3.500 6v4M6 8h3" stroke="#246"/><rect x="9" y="5" width="6" height="10" rx="2" fill="#8fb4df" stroke="#246"/><use href="#s-star" x="11" y="0" width="5" height="5"/></svg>Stored Procedures</div>

              <div class="relative h-4 flex items-center pl-[33px]"><span class="w-[8px] border-t border-dotted border-t-[#999]"></span><svg class="mr-[5px]" width="16" height="16"><use href="#s-subj"/><use href="#s-star" x="11" y="0" width="5" height="5"/></svg>Subject Areas</div>

              <div class="relative h-4 flex items-center pl-[24px]"><span class="w-[9px] h-[9px] border border-[#888] bg-white relative flex items-center justify-center text-[9px] leading-[7px] text-[#333]">+</span><span class="w-[8px] border-t border-dotted border-t-[#999]"></span><svg class="mr-[5px]" width="16" height="16" viewBox="0 0 16 16"><rect x="1" y="2" width="14" height="13" fill="#e8f0fa" stroke="#246"/><path d="M1 6h14M1 10h14" stroke="#246"/><use href="#s-star" x="11" y="0" width="5" height="5"/></svg>Tables</div>

              <div class="relative h-4 flex items-center pl-[33px]"><span class="w-[8px] border-t border-dotted border-t-[#999]"></span><svg class="mr-[5px]" width="16" height="16" viewBox="0 0 16 16"><use href="#s-globe" width="16" height="16"/><use href="#s-star" x="11" y="0" width="5" height="5"/></svg>Tablespaces</div>

              <div class="relative h-4 flex items-center pl-[24px]"><span class="w-[9px] h-[9px] border border-[#888] bg-white relative flex items-center justify-center text-[9px] leading-[7px] text-[#333]">+</span><span class="w-[8px] border-t border-dotted border-t-[#999]"></span><svg class="mr-[5px]" width="16" height="16" viewBox="0 0 16 16"><path d="M0 9L3.500 1 7 9M1.500 6.500h4" fill="none" stroke="#9a35b0" stroke-width="1.800"/><path d="M4 16l4.500-10L13 16M5.500 12.500h6" fill="none" stroke="#3a78c8" stroke-width="2"/><use href="#s-star" x="11" y="0" width="5" height="5"/></svg>Themes</div>

              <div class="relative h-4 flex items-center pl-[24px]"><span class="w-[9px] h-[9px] border border-[#888] bg-white relative flex items-center justify-center text-[9px] leading-[7px] text-[#333]">+</span><span class="w-[8px] border-t border-dotted border-t-[#999]"></span><svg class="mr-[5px]" width="16" height="16" viewBox="0 0 16 16"><rect x="3" y="4" width="10" height="11.500" fill="#ddd" stroke="#345"/><path d="M3 2.500h10" stroke="#345" stroke-width="2"/><circle cx="8" cy="10" r="2.500" fill="#c87a3a"/><use href="#s-star" x="11" y="0" width="5" height="5"/></svg>Trigger Templates</div>

              <div class="relative h-4 flex items-center pl-[33px]"><span class="w-[8px] border-t border-dotted border-t-[#999]"></span><svg class="mr-[5px]" width="16" height="16" viewBox="0 0 16 16"><rect x="1" y="1" width="8" height="12" rx="2" fill="#f2c84b" stroke="#875"/><circle cx="11" cy="10" r="2.500" fill="#4a86d0"/><path d="M6 15.500c0-3 3-3.500 5-3.500s4.500 .5 4.500 3.500z" fill="#4a86d0"/><use href="#s-star" x="11" y="0" width="5" height="5"/></svg>User Ids</div>

              <div class="relative h-4 flex items-center pl-[33px]"><span class="w-[8px] border-t border-dotted border-t-[#999]"></span><svg class="mr-[5px]" width="16" height="16" viewBox="0 0 16 16"><rect x="1" y="1" width="13" height="14" fill="#f2e0a8" stroke="#875"/><use href="#s-star" x="11" y="0" width="5" height="5"/></svg>Validation Rules</div>
            </div>
            <!-- tree vertical scrollbar -->
            <div class="w-[15px] h-full bg-[#f0f0f0] flex flex-col items-center">
              <div class="h-[17px] flex items-center"><svg width="9" height="6" viewBox="0 0 9 6"><path d="M.7 5l3.800-4 3.800 4" fill="none" stroke="#555" stroke-width="1.700"/></svg></div>
              <div class="w-full h-[392px] bg-[#c4c4c4]"></div>
              <div class="mt-auto h-[16px] flex items-center"><svg width="9" height="6" viewBox="0 0 9 6"><path d="M.7 1l3.800 4 3.800-4" fill="none" stroke="#555" stroke-width="1.700"/></svg></div>
            </div>
          </div>
          <!-- tree horizontal scrollbar -->
          <div class="h-[15px] bg-[#f0f0f0] flex items-center">
            <svg class="ml-[5px]" width="6" height="9" viewBox="0 0 6 9"><path d="M5 .7l-4 3.800 4 3.800" fill="none" stroke="#555" stroke-width="1.700"/></svg>
            <div class="ml-[6px] w-[137px] h-full bg-[#c8c8c8]"></div>
            <svg class="ml-[13px]" width="6" height="9" viewBox="0 0 6 9"><path d="M1 .7l4 3.800-4 3.800" fill="none" stroke="#555" stroke-width="1.700"/></svg>
          </div>
        </div>
        <div class="flex-1 flex items-center pl-[9px] pt-[3px] text-[11px]">
          <svg width="11" height="13" class="mr-[6px]"><use href="#s-doc"/></svg><span class="text-[#1f6fe0]">Model</span>
          <svg width="15" height="14" class="ml-[12px] mr-[5px]"><use href="#s-subj"/></svg><span class="text-[#3f4f77]">Subject Area</span>
        </div>
      </div>
      <div class="h-[21px] bg-[#e6e6e6] flex leading-[19px]">
        <div class="w-[94px] pl-[6px]">Project Explorer</div>
        <div class="w-[92px] pl-[7px] bg-white text-[#2b579a] border-b-[2px] border-b-[#2b579a]">Model Explorer</div>
      </div>
    </div>

    <!-- centre -->
    <div class="ml-[4px] w-[1495px] flex flex-col">
      <div class="h-[4px]"></div>
      <div class="h-[28px] bg-white flex items-end relative">
        <div class="ml-[1px] w-[82px] h-[27px] pt-[1px] bg-[#2b579a] text-white flex items-center pl-[18px]">Sakila
          <svg class="ml-auto mr-[6px]" width="10" height="10" viewBox="0 0 10 10"><path d="M1 1l8 8M9 1L1 9" stroke="#fff" stroke-width="1.600"/></svg>
        </div>
        <div class="flex h-[27px] pt-[1px] items-center text-[#666]">
          <span class="w-[109px] pl-[18px]">Northwind</span>
          <span class="w-[141px] pl-[18px]">CommonObjects</span>
          <span class="pl-[18px]">SmapleOracle</span>
        </div>
        <span class="absolute right-[4px] top-[12px] w-0 h-0 border-x-[3.500px] border-x-transparent border-t-[4px] border-t-[#777]"></span>
      </div>
      <div class="h-[2px] bg-[#2b579a]"></div>
      <div class="h-[1px] bg-white"></div>

      <div class="h-[513px] flex bg-white">
        <div class="w-[1477px] flex flex-col">
          <div class="h-[497px] flex">
            <!-- canvas -->
            <div class="relative ml-[1px] w-[1460px] h-full overflow-hidden whitespace-nowrap bg-[#eff5fc] bg-[radial-gradient(#e3ebf7_.7px,transparent_1px),radial-gradient(#e3ebf7_.7px,transparent_1px)] bg-[length:6px_6px] bg-[position:0_0,3px_3px] text-[#2f4788] leading-[12.700px] text-[10.500px]">
              <svg class="absolute left-0 top-0" width="1460" height="497" viewBox="216 217 1460 497" fill="none" stroke="#c0c2c4" stroke-width="2" stroke-dasharray="13 4">
                <path d="M825 291H1137V532"/>
                <path d="M821 387H922V396"/>
                <path d="M732 339H706V473"/>
                <path d="M778 412V714"/>
                <path d="M872 459H839V714"/>
                <path d="M968 460H994V634"/>
                <path d="M530 531H554"/>
                <path d="M640 531H664"/>
                <path d="M745 531H1076"/>
                <path d="M706 603V647H976"/>
                <path d="M1076 584H1051V634"/>
                <path d="M1099 597V704H1069"/>
                <path d="M1176 597V714"/>
                <g fill="#8e8e8e" stroke="none">
                  <circle cx="825" cy="291" r="4"/><circle cx="922" cy="396" r="4"/><circle cx="732" cy="339" r="4"/><circle cx="872" cy="459" r="4"/><circle cx="554" cy="531" r="4"/><circle cx="664" cy="531" r="4"/><circle cx="1076" cy="531" r="4"/><circle cx="976" cy="648" r="4"/><circle cx="1076" cy="584" r="4"/><circle cx="1069" cy="704" r="4"/>
                </g>
              </svg>

              <!-- country -->
              <div class="absolute left-[241px] top-[286px] w-[73px]">
                <div class="h-[9px] leading-[5px] text-[11px] font-bold text-black tracking-[-.5px]">country</div>
                <div class="w-[73px] h-[53px] border border-[#a2a6ac] shadow-[4px_4px_0_#babdc3] flex flex-col">
                  <div class="pl-[5px] h-[20px] leading-[18px] bg-linear-to-b from-white to-[#eef0f8] border-b-[2px] border-b-[#b8bac0]">country_id</div>
                  <div class="pl-[5px] flex-1 pt-[3px] bg-linear-to-b from-white to-[#c6d3fb]">country<br>last_update</div>
                </div>
              </div>

              <!-- city -->
              <div class="absolute left-[342px] top-[280px] w-[82px]">
                <div class="h-[9px] leading-[5px] text-[11px] font-bold text-black tracking-[-.5px]">city</div>
                <div class="h-[65px] border border-[#a2a6ac] shadow-[4px_4px_0_#babdc3] flex flex-col">
                  <div class="pl-[5px] h-[20px] leading-[18px] bg-linear-to-b from-white to-[#eef0f8] border-b-[2px] border-b-[#b8bac0]">city_id</div>
                  <div class="pl-[5px] flex-1 pt-[3px] bg-linear-to-b from-white to-[#c6d3fb]">city<br><span class="text-[#0b46c4]">country_id (FK)</span><br>last_update</div>
                </div>
              </div>

              <!-- address -->
              <div class="absolute left-[452px] top-[247px] w-[77px]">
                <div class="h-[9px] leading-[5px] text-[11px] font-bold text-black tracking-[-.5px]">address</div>
                <div class="h-[130px] border border-[#a2a6ac] shadow-[4px_4px_0_#babdc3] flex flex-col">
                  <div class="pl-[5px] h-[21px] leading-[19px] bg-linear-to-b from-white to-[#eef0f8] border-b-[2px] border-b-[#b8bac0]">address_id</div>
                  <div class="pl-[5px] flex-1 pt-[4px] bg-linear-to-b from-white to-[#c6d3fb]">address<br>address2<br>district<br><span class="text-[#0b46c4]">city_id (FK)</span><br>postal_code<br>phone<br><span class="text-[#111]">location</span><br>last_update</div>
                </div>
              </div>

              <!-- customer -->
              <div class="absolute left-[520px] top-[56px] w-[85px]">
                <div class="h-[9px] leading-[5px] text-[11px] font-bold text-black tracking-[-.5px]">customer</div>
                <div class="h-[130px] border border-[#a2a6ac] shadow-[4px_4px_0_#babdc3] flex flex-col">
                  <div class="pl-[5px] h-[21px] leading-[19px] bg-linear-to-b from-white to-[#eef0f8] border-b-[2px] border-b-[#b8bac0]">customer_id</div>
                  <div class="pl-[5px] flex-1 pt-[4px] bg-linear-to-b from-white to-[#c6d3fb]"><span class="text-[#0b46c4]">store_id (FK)</span><br>first_name<br><span class="text-[#111]">last_name</span><br>email<br><span class="text-[#0b46c4]">address_id (FK)</span><br>active<br>create_date<br>last_update</div>
                </div>
              </div>

              <!-- payment -->
              <div class="absolute left-[661px] top-[188px] w-[91px]">
                <div class="h-[9px] leading-[5px] text-[11px] font-bold text-black tracking-[-.5px]">payment</div>
                <div class="h-[104px] border border-[#a2a6ac] shadow-[4px_4px_0_#babdc3] flex flex-col">
                  <div class="pl-[5px] h-[21px] leading-[19px] bg-linear-to-b from-white to-[#eef0f8] border-b-[2px] border-b-[#b8bac0]">payment_id</div>
                  <div class="pl-[5px] flex-1 pt-[4px] bg-linear-to-b from-white to-[#c6d3fb]"><span class="text-[#0b46c4]">customer_id (FK)<br>staff_id (FK)<br>rental_id (FK)</span><br>amount<br>payment_date<br>last_update</div>
                </div>
              </div>

              <!-- store -->
              <div class="absolute left-[864px] top-[306px] w-[116px]">
                <div class="h-[9px] leading-[5px] text-[11px] font-bold text-black tracking-[-.5px]">store</div>
                <div class="h-[65px] border border-[#a2a6ac] shadow-[4px_4px_0_#babdc3] flex flex-col">
                  <div class="pl-[5px] h-[21px] leading-[19px] bg-linear-to-b from-white to-[#eef0f8] border-b-[2px] border-b-[#b8bac0]">store_id</div>
                  <div class="pl-[5px] flex-1 pt-[3px] bg-linear-to-b from-white to-[#c6d3fb]"><span class="text-[#0b46c4]">manager_staff_id (FK)<br>address_id (FK)</span><br>last_update</div>
                </div>
              </div>

              <!-- staff -->
              <div class="absolute left-[764px] top-[408px] w-[86px]">
                <div class="h-[9px] leading-[5px] text-[11px] font-bold text-black tracking-[-.5px]">staff</div>
                <div class="h-[130px] border border-[#a2a6ac] shadow-[4px_4px_0_#babdc3] flex flex-col">
                  <div class="pl-[5px] h-[20px] leading-[18px] bg-linear-to-b from-white to-[#eef0f8] border-b-[2px] border-b-[#b8bac0]">staff_id</div>
                  <div class="pl-[5px] flex-1 pt-[4px] bg-linear-to-b from-white to-[#c6d3fb]">first_name<br>last_name<br><span class="text-[#0b46c4]">address_id (FK)</span><br>picture<br>email</div>
                </div>
              </div>

              <!-- actor -->
              <div class="absolute left-[976px] top-[468px] w-[65px]">
                <div class="h-[9px] leading-[5px] text-[11px] font-bold text-black tracking-[-.5px]">actor</div>
                <div class="h-[60px] border border-[#a2a6ac] shadow-[4px_4px_0_#babdc3] bg-linear-to-b from-white to-[#eef0f8] pl-[5px] leading-[19px]">actor_id</div>
              </div>

              <!-- film_actor -->
              <div class="absolute left-[1085px] top-[474px] w-[85px]">
                <div class="h-[9px] leading-[5px] text-[11px] font-bold text-black tracking-[-.5px] pl-[3px]">film_actor</div>
                <div class="h-[60px] rounded-t-[8px] border border-[#a2a6ac] shadow-[4px_4px_0_#babdc3] bg-linear-to-b from-white to-[#eef0f8] pl-[5px] leading-[19px] text-[#0b46c4]">actor_id (FK)</div>
              </div>
            </div>
            <div class="w-[16px] h-full bg-[#cfcfcf]"></div>
          </div>
          <!-- horizontal scrollbar -->
          <div class="h-[16px] bg-[#f0f0f0] flex items-center">
            <svg class="ml-[9px]" width="6" height="9" viewBox="0 0 6 9"><path d="M5 .7l-4 3.800 4 3.800" fill="none" stroke="#555" stroke-width="1.700"/></svg>
            <div class="ml-[183px] w-[1082px] h-full bg-[#cfcfcf]"></div>
          </div>
        </div>
        <!-- vertical scrollbar -->
        <div class="w-[16px] h-[497px] bg-[#f0f0f0] flex flex-col items-center ml-[1px]">
          <div class="h-[17px] flex items-center"><svg width="9" height="6" viewBox="0 0 9 6"><path d="M.7 5l3.800-4 3.800 4" fill="none" stroke="#555" stroke-width="1.700"/></svg></div>
          <div class="w-full h-[208px] bg-[#cfcfcf]"></div>
          <div class="mt-auto h-[16px] flex items-center"><svg width="9" height="6" viewBox="0 0 9 6"><path d="M.7 1l3.800 4 3.800-4" fill="none" stroke="#555" stroke-width="1.700"/></svg></div>
        </div>
      </div>

      <div class="h-[2px]"></div>
      <div class="h-px bg-[#a8a8a8] -ml-px"></div>
      <div class="relative h-[20px]">
        <svg class="absolute left-0 top-0" width="120" height="20" viewBox="0 0 120 20"><path d="M0 0l9 19h99l6-19z" fill="#fff" stroke="#333"/></svg>
        <span class="relative ml-[18px] leading-[17px] text-[#111]">ER_Diagram_117</span>
      </div>
    </div>

    <!-- right panel -->
    <div class="ml-[5px] flex-1 flex flex-col border-l border-l-[#dcdcdc]">
      <div class="h-[24px] pt-[6px] flex items-center pl-[5px] text-[#2b579a]">Properties
        <svg class="ml-auto" width="9" height="12"><use href="#s-pin"/></svg>
        <svg class="ml-[8px] mr-[7px]" width="9" height="9"><use href="#s-x"/></svg>
      </div>
      <div class="h-[26px] border-y border-[#c8c8c8] flex items-center">
        <div class="ml-[2px] w-[22px] h-[22px] bg-[#cfcfcf] flex items-center justify-center"><svg width="15" height="15" viewBox="0 0 15 15"><rect x="1" y="1" width="4" height="4" fill="#fff" stroke="#333"/><rect x="1" y="9" width="4" height="4" fill="#fff" stroke="#333"/><path d="M7 1.500h7M7 4h7M7 6.500h7M7 9.500h7M7 12h7M7 14h7" stroke="#333"/></svg></div>
        <svg class="ml-[3px]" width="16" height="17" viewBox="0 0 16 17"><path d="M2 2h5v5H2z" fill="#ddd" stroke="#555"/><path d="M2 10h5l-5 6h5" fill="none" stroke="#111" stroke-width="1.500"/><path d="M12 2v12M9 10l3 4 3-4" fill="none" stroke="#1a6fc0" stroke-width="2"/></svg>
        <span class="ml-[5px] w-px h-[20px] bg-[#ccc]"></span>
        <svg class="ml-[7px]" width="14" height="13" viewBox="0 0 14 13"><rect x=".5" y=".5" width="13" height="12" fill="#fff" stroke="#111"/><path d="M0 2h14" stroke="#1a3a8a" stroke-width="2"/><path d="M3 5h6v5H3z" fill="none" stroke="#111"/></svg>
        <svg class="ml-[8px]" width="14" height="15" viewBox="0 0 14 15"><rect x=".7" y=".7" width="10" height="13.600" fill="#fff" stroke="#333"/><path d="M3 4h5M3 7h4" stroke="#888"/><path d="M6 12l7-7" stroke="#444" stroke-width="2"/></svg>
        <svg class="ml-[8px]" width="14" height="15" viewBox="0 0 14 15"><rect x=".7" y=".7" width="12" height="13.600" fill="#eee" stroke="#aaa"/><path d="M3 4h8M3 7h5" stroke="#888"/><path d="M6 11l6-5" stroke="#777" stroke-width="1.500"/></svg>
        <span class="ml-[6px] w-px h-[20px] bg-[#ccc]"></span>
        <svg class="ml-[7px]" width="14" height="16" viewBox="0 0 14 16"><rect x=".7" y=".7" width="12.600" height="14.600" rx="1" fill="#fff" stroke="#111" stroke-width="1.200"/><path d="M.7 3h12.600" stroke="#111" stroke-width="2"/><path d="M7 14V6M4 9l3-3 3 3" fill="none" stroke="#1ca7de" stroke-width="1.500"/></svg>
        <svg class="ml-[5px]" width="18" height="18"><use href="#s-book"/></svg>
      </div>
      <div class="flex-1 bg-white"></div>
      <div class="h-[22px] bg-[#ececec] flex leading-[20px] border-t border-t-[#c8c8c8]">
        <div class="w-[64px] pl-[5px] bg-white text-[#2b579a] border-b-[2px] border-b-[#2b579a]">Properties</div>
        <div class="w-[88px] pl-[6px] bg-[#e2e2e2] border-r border-r-[#aaa] h-[20px]">Objects Count</div>
      </div>
    </div>
  </div>

  <!-- bottom panels -->
  <div class="h-[125px] flex">
    <!-- action log -->
    <div class="ml-[5px] w-[634px] flex flex-col">
      <div class="h-[25px] flex items-center pl-[5px] pt-[3px] text-[#2b579a]">Action Log
        <svg class="ml-auto" width="9" height="12"><use href="#s-pin"/></svg>
        <svg class="ml-[8px] mr-[9px]" width="9" height="9"><use href="#s-x"/></svg>
      </div>
      <div class="h-[98px] border border-[#a8a8a8] flex flex-col">
        <div class="h-[31px] pb-[5px] flex items-center border-b border-b-[#c8c8c8]">
          <svg class="ml-[5px]" width="16" height="19" viewBox="0 0 16 19" fill="#eee" stroke="#333"><path d="M2 5V2h8v3" fill="none"/><rect x=".5" y="5" width="6" height="13" rx="1"/><rect x="9" y="5" width="6" height="13" rx="1"/></svg>
          <span class="ml-[4px] w-px h-[20px] bg-[#ccc]"></span>
          <svg class="ml-[3px]" width="16" height="16"><use href="#s-bino"/></svg>
          <svg class="ml-[8px]" width="14" height="20" viewBox="0 0 16 20"><path d="M4 1h3v10H1V7zM9 1h3l3 6v4H9z" fill="#eee" stroke="#333"/><path d="M2 16h11M10 13l3 3-3 3" fill="none" stroke="#333"/></svg>
          <span class="ml-[6px] w-px h-[20px] bg-[#ccc]"></span>
          <svg class="ml-[6px]" width="14" height="15" viewBox="0 0 14 15"><rect x=".7" y=".7" width="12.600" height="13.600" fill="#e8e8e8" stroke="#aaa"/><path d="M3 4h8M3 7h8M3 10h8" stroke="#777"/></svg>
          <span class="ml-[5px] w-px h-[20px] bg-[#ccc]"></span>
          <svg class="ml-[5px]" width="17" height="19" viewBox="0 0 16 16"><rect x="1" y="1" width="11" height="13" fill="#f8f8f8" stroke="#999"/><circle cx="8" cy="8" r="3.500" fill="#fff" stroke="#333" stroke-width="1.200"/><path d="M10.500 10.500l4 4" stroke="#333" stroke-width="1.500"/></svg>
          <span class="ml-[4px] w-px h-[20px] bg-[#ccc]"></span>
          <svg class="ml-[4px]" width="17" height="18" viewBox="0 0 17 18" fill="none" stroke="#555" stroke-width="1.200"><path d="M2 11v6M15 11v6M2 14h13M5 12l-3 2 3 2M12 12l3 2-3 2"/><path d="M6 9h5V5H7M9 2L6 5l3 3"/></svg>
          <svg class="ml-[4px]" width="17" height="18" viewBox="0 0 17 18" fill="none" stroke="#1a2a6a" stroke-width="1.400"><path d="M2 11v6M15 11v6M2 14h13M5 12l-3 2 3 2M12 12l3 2-3 2"/><path d="M6 9h6V4H8M11 1L7 4l4 3" stroke-width="2.200"/></svg>
          <span class="ml-[5px] w-px h-[20px] bg-[#ccc]"></span>
          <svg class="ml-[7px]" width="16" height="19" viewBox="0 0 16 19"><path d="M1 1h14l-2 8H3z" fill="#cde0f2" stroke="#334"/><path d="M8 1v9M5 7l3 3 3-3" fill="none" stroke="#111" stroke-width="1.500"/><path d="M3 13h10M4 15h8M5 17h6" stroke="#555" stroke-dasharray="1 1"/></svg>
          <span class="ml-[5px] w-px h-[20px] bg-[#ccc]"></span>
          <svg class="ml-[6px]" width="18" height="18"><use href="#s-book"/></svg>
        </div>
        <div class="mt-[5px] ml-[5px] w-[623px] h-[36px] border border-[#8a8f99] bg-white flex items-start">
          <div class="flex items-center h-[17px] mt-px">
            <span class="ml-[4px] w-[9px] h-[9px] border border-[#888] flex items-center justify-center text-[9px] leading-[7px] text-[#333]">+</span>
            <span class="w-[5px] border-t border-dotted border-t-[#999]"></span>
            <svg class="mr-[4px]" width="17" height="18" viewBox="0 0 16 19" fill="#e2e2e2" stroke="#999"><path d="M2 5V2h8v3" fill="none"/><rect x=".5" y="5" width="6" height="13" rx="1"/><rect x="9" y="5" width="6" height="13" rx="1"/></svg>
            <span class="px-[3px] bg-[#e6e6e6] leading-[17px] text-[#222]">Set Property</span>
          </div>
        </div>
        <div class="flex-1 flex items-center pl-[5px]">
          <svg width="16" height="18" viewBox="0 0 16 18" fill="#f4f4f4"><path d="M2 4V1.500h8V4" fill="none" stroke="#333"/><rect x=".5" y="4" width="6" height="13.500" rx="1" stroke="#1a3a8a"/><rect x="9" y="4" width="6" height="13.500" rx="1" stroke="#a02020"/></svg>
          <span class="ml-[5px] text-[#1f6fe0]">Details</span>
          <svg class="ml-[9px]" width="14" height="13" viewBox="0 0 14 13"><path d="M7 .5l6.500 12H.5z" fill="#26b4a8" stroke="#0c6a63"/></svg>
          <span class="ml-[6px]">Summary</span>
        </div>
      </div>
    </div>

    <!-- advisories -->
    <div class="ml-[5px] w-[632px] flex flex-col">
      <div class="h-[25px] flex items-center pl-[4px] pt-[3px] text-[#2b579a]">Advisories
        <svg class="ml-auto" width="9" height="12"><use href="#s-pin"/></svg>
        <svg class="ml-[8px] mr-[8px]" width="9" height="9"><use href="#s-x"/></svg>
      </div>
      <div class="h-[98px] border border-[#a8a8a8] flex flex-col">
        <div class="h-[31px] pb-[5px] flex items-center border-b border-b-[#c8c8c8]">
          <svg class="ml-[6px]" width="14" height="15" viewBox="0 0 14 15"><path d="M.5.500h11l2 2v12H.5z" fill="#4a7dc0" stroke="#1f3a6a"/><rect x="3" y="1" width="7" height="5" fill="#e8f0fa"/><rect x="3" y="9" width="8" height="5" fill="#dfe8f4"/></svg>
          <svg class="ml-[8px]" width="14" height="13" viewBox="0 0 14 13"><rect x=".7" y=".7" width="12.600" height="11.600" fill="#fff" stroke="#1f4f9a" stroke-width="1.400"/><path d="M3 4h8M3 7h8M3 10h5" stroke="#1f4f9a"/></svg>
          <svg class="ml-[7px]" width="17" height="17"><use href="#s-book"/></svg>
        </div>
        <div class="flex-1 bg-white flex items-start pt-[1px]">
          <svg class="ml-[2px] mt-[1px]" width="14" height="14" viewBox="0 0 14 14"><rect x=".7" y=".7" width="12.600" height="12.600" rx="2" fill="#2e9a2e" stroke="#111"/><path d="M3 7l3 3 5-7" fill="none" stroke="#fff" stroke-width="1.800"/></svg>
          <span class="ml-[3px] px-[3px] bg-[#e6e6e6] leading-[17px] text-[#222]">Remove Property</span>
        </div>
      </div>
    </div>

    <!-- overview -->
    <div class="ml-[5px] flex-1 flex flex-col">
      <div class="h-[25px] flex items-center pl-[6px] pt-[3px] text-[#2b579a]">Overview
        <svg class="ml-auto" width="9" height="12"><use href="#s-pin"/></svg>
        <svg class="ml-[8px] mr-[7px]" width="9" height="9"><use href="#s-x"/></svg>
      </div>
      <svg width="632" height="98" viewBox="0 0 632 98" class="bg-[#d0d0d0]">
        <defs><pattern id="ov" width="6" height="6" patternUnits="userSpaceOnUse"><circle cx="2" cy="2" r=".6" fill="#d5dfee"/></pattern></defs>
        <rect x="218" y="0" width="165" height="98" fill="#eef4fc"/>
        <rect x="218" y="0" width="165" height="98" fill="url(#ov)"/>
        <path d="M53 0v98M108 0v98M163 0v98M218 0v98M273 0v98M329 0v98M384 0v98M438 0v98M493 0v98M548 0v98M603 0v98" stroke="#757575"/>
        <path d="M0 70h632" stroke="#555"/>
        <path d="M0 .5h632M0 97.500h632M.5 0v98" stroke="#909090"/>
        <path d="M300 8h32M336 8v20M296 32h45M286 28h14M326 33v22M305 50v8h20M312 45v8M338 48v10M352 48v5M310 58h22" stroke="#b4b4b4" fill="none"/>
        <g fill="#dfe4ee" stroke="#6a6a6a" stroke-width=".8">
          <rect x="296" y="3" width="8" height="12"/><rect x="309" y="15" width="8" height="10"/><rect x="290" y="20" width="7" height="13"/><rect x="279" y="23" width="8" height="7"/><rect x="270" y="24" width="7" height="5"/><rect x="328" y="26" width="11" height="7" fill="#f4f4f4"/><rect x="318" y="35" width="8" height="15"/><rect x="348" y="43" width="8" height="5" fill="#ccc"/><rect x="299" y="51" width="9" height="11"/><rect x="332" y="56" width="8" height="7"/><rect x="346" y="52" width="12" height="17"/><rect x="360" y="57" width="8" height="5"/><rect x="347" y="72" width="10" height="5" fill="#f4f4f4"/><rect x="348" y="80" width="8" height="7"/><rect x="266" y="92" width="7" height="4"/>
        </g>
        <g fill="#17338c">
          <rect x="297" y="6" width="6" height="1.500"/><rect x="297" y="10" width="4" height="3"/><rect x="310" y="18" width="6" height="1.500"/><rect x="310" y="21" width="4" height="2"/><rect x="291" y="24" width="4" height="2"/><rect x="291" y="29" width="5" height="3"/><rect x="280" y="25" width="6" height="1.500"/><rect x="271" y="26" width="5" height="1.500"/><rect x="319" y="44" width="6" height="5"/><rect x="337" y="43" width="8" height="3" fill="#111"/><rect x="300" y="53" width="7" height="1.500"/><rect x="300" y="56" width="7" height="1.500"/><rect x="300" y="59" width="7" height="1.500"/><rect x="333" y="58" width="6" height="4"/><rect x="347" y="56" width="6" height="4"/><rect x="347" y="62" width="10" height="5"/><rect x="361" y="59" width="6" height="1.500"/><rect x="349" y="82" width="6" height="1.500"/><rect x="349" y="85" width="6" height="1.500"/><rect x="267" y="93" width="4" height="2" fill="#111"/>
        </g>
        <path d="M250 0v41h134V0" fill="none" stroke="#1ba1f2" stroke-width="3"/>
        <rect x="244" y="43" width="5" height="5" fill="#1ba1f2"/><rect x="384" y="43" width="5" height="5" fill="#1ba1f2"/>
      </svg>
    </div>
  </div>

  <!-- status bar -->
  <div class="flex-1 flex items-center text-[#444] pt-[2px]">
    <span class="ml-[3px] w-[1199px]">For Help, press F1</span>
    <span class="w-[410px]">Non-Mart Model</span>
    <span class="w-[148px]">MySQL 8.x</span>
    <span class="w-[37px]">80%</span>
    <span class="w-[6px] h-[2px] bg-[#444]"></span>
    <span class="ml-[3px] relative w-[98px] h-px bg-[#444]"><span class="absolute left-[40px] -top-[5px] w-[3px] h-[11px] bg-[#444]"></span></span>
    <span class="ml-[4px] relative w-[7px] h-[2px] bg-[#444]"><span class="absolute left-[2.500px] -top-[2.500px] w-[2px] h-[7px] bg-[#444]"></span></span>
  </div>
</div>
</body>
</html>
